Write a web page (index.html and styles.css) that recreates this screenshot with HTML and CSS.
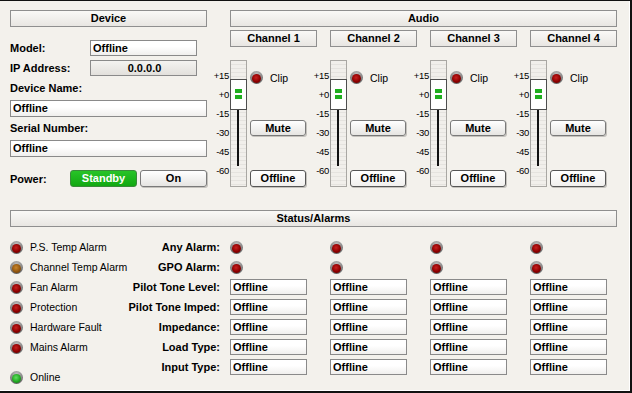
FILE: index.html
```html
<!DOCTYPE html>
<html lang="en">
<head>
    <meta charset="UTF-8">
    <title>Amplifier Status</title>
    <link rel="stylesheet" href="styles.css">
</head>
<body>
    <div class="panel">
        <div class="top">
            <!-- Device -->
            <div class="device">
                <div class="bar">Device</div>
                <div class="row first">
                    <span class="label">Model:</span>
                    <div class="field short">Offline</div>
                </div>
                <div class="row">
                    <span class="label">IP Address:</span>
                    <div class="field short center">0.0.0.0</div>
                </div>
                <div class="row">
                    <span class="label">Device Name:</span>
                </div>
                <div class="field wide">Offline</div>
                <div class="row gap3">
                    <span class="label">Serial Number:</span>
                </div>
                <div class="field wide">Offline</div>
                <div class="row power">
                    <span class="label power-label">Power:</span>
                    <button class="btn standby">Standby</button>
                    <button class="btn on">On</button>
                </div>
            </div>

            <!-- Audio -->
            <div class="audio">
                <div class="bar">Audio</div>
                <div class="ch-heads">
                    <div class="bar ch">Channel 1</div>
                    <div class="bar ch">Channel 2</div>
                    <div class="bar ch">Channel 3</div>
                    <div class="bar ch">Channel 4</div>
                </div>
                <div class="ch-bodies">
                    <div class="ch-body">
                        <div class="scale"><span>+15</span><span>+0</span><span>-15</span><span>-30</span><span>-45</span><span>-60</span></div>
                        <div class="track"><div class="handle"><i></i><i></i></div><div class="stem"></div></div>
                        <div class="controls">
                            <div class="clip"><span class="led red"></span>Clip</div>
                            <button class="btn mute">Mute</button>
                            <button class="btn state">Offline</button>
                        </div>
                    </div>
                    <div class="ch-body">
                        <div class="scale"><span>+15</span><span>+0</span><span>-15</span><span>-30</span><span>-45</span><span>-60</span></div>
                        <div class="track"><div class="handle"><i></i><i></i></div><div class="stem"></div></div>
                        <div class="controls">
                            <div class="clip"><span class="led red"></span>Clip</div>
                            <button class="btn mute">Mute</button>
                            <button class="btn state">Offline</button>
                        </div>
                    </div>
                    <div class="ch-body">
                        <div class="scale"><span>+15</span><span>+0</span><span>-15</span><span>-30</span><span>-45</span><span>-60</span></div>
                        <div class="track"><div class="handle"><i></i><i></i></div><div class="stem"></div></div>
                        <div class="controls">
                            <div class="clip"><span class="led red"></span>Clip</div>
                            <button class="btn mute">Mute</button>
                            <button class="btn state">Offline</button>
                        </div>
                    </div>
                    <div class="ch-body">
                        <div class="scale"><span>+15</span><span>+0</span><span>-15</span><span>-30</span><span>-45</span><span>-60</span></div>
                        <div class="track"><div class="handle"><i></i><i></i></div><div class="stem"></div></div>
                        <div class="controls">
                            <div class="clip"><span class="led red"></span>Clip</div>
                            <button class="btn mute">Mute</button>
                            <button class="btn state">Offline</button>
                        </div>
                    </div>
                </div>
            </div>
        </div>

        <!-- Status/Alarms -->
        <div class="status">
            <div class="bar">Status/Alarms</div>
            <div class="status-body">
                <ul class="alarms">
                    <li><span class="led red"></span>P.S. Temp Alarm</li>
                    <li><span class="led amber"></span>Channel Temp Alarm</li>
                    <li><span class="led red"></span>Fan Alarm</li>
                    <li><span class="led red"></span>Protection</li>
                    <li><span class="led red"></span>Hardware Fault</li>
                    <li><span class="led red"></span>Mains Alarm</li>
                    <li class="online"><span class="led green"></span>Online</li>
                </ul>
                <div class="grid">
                    <span class="glabel">Any Alarm:</span>
                    <span class="cell"><span class="led red"></span></span>
                    <span class="cell"><span class="led red"></span></span>
                    <span class="cell"><span class="led red"></span></span>
                    <span class="cell"><span class="led red"></span></span>

                    <span class="glabel">GPO Alarm:</span>
                    <span class="cell"><span class="led red"></span></span>
                    <span class="cell"><span class="led red"></span></span>
                    <span class="cell"><span class="led red"></span></span>
                    <span class="cell"><span class="led red"></span></span>

                    <span class="glabel">Pilot Tone Level:</span>
                    <span class="cell"><span class="field cellf">Offline</span></span>
                    <span class="cell"><span class="field cellf">Offline</span></span>
                    <span class="cell"><span class="field cellf">Offline</span></span>
                    <span class="cell"><span class="field cellf">Offline</span></span>

                    <span class="glabel">Pilot Tone Imped:</span>
                    <span class="cell"><span class="field cellf">Offline</span></span>
                    <span class="cell"><span class="field cellf">Offline</span></span>
                    <span class="cell"><span class="field cellf">Offline</span></span>
                    <span class="cell"><span class="field cellf">Offline</span></span>

                    <span class="glabel">Impedance:</span>
                    <span class="cell"><span class="field cellf">Offline</span></span>
                    <span class="cell"><span class="field cellf">Offline</span></span>
                    <span class="cell"><span class="field cellf">Offline</span></span>
                    <span class="cell"><span class="field cellf">Offline</span></span>

                    <span class="glabel">Load Type:</span>
                    <span class="cell"><span class="field cellf">Offline</span></span>
                    <span class="cell"><span class="field cellf">Offline</span></span>
                    <span class="cell"><span class="field cellf">Offline</span></span>
                    <span class="cell"><span class="field cellf">Offline</span></span>

                    <span class="glabel">Input Type:</span>
                    <span class="cell"><span class="field cellf">Offline</span></span>
                    <span class="cell"><span class="field cellf">Offline</span></span>
                    <span class="cell"><span class="field cellf">Offline</span></span>
                    <span class="cell"><span class="field cellf">Offline</span></span>
                </div>
            </div>
        </div>
    </div>
</body>
</html>
```

FILE: styles.css
```css
* {
    margin: 0;
    padding: 0;
    box-sizing: border-box;
    font-family: 'Liberation Sans', Arial, sans-serif;
}

html, body {
    width: 632px;
    height: 393px;
    overflow: hidden;
}

body {
    background: #f3f1ec;
    color: #000;
}

.panel {
    width: 632px;
    height: 393px;
    border-top: 1px solid #111;
    border-right: 2px solid #111;
    border-bottom: 2px solid #111;
    box-shadow: inset -1px -1px 0 #fff;
    padding: 9px 0 0 10px;
}

/* Header bars */
.bar {
    height: 17px;
    border: 1px solid #8f8f8f;
    background: linear-gradient(to bottom, #faf9f7, #e8e6e2);
    font-size: 11px;
    font-weight: bold;
    line-height: 15px;
    text-align: center;
}

.top {
    display: flex;
    gap: 23px;
}

/* Device section */
.device {
    width: 197px;
    display: flex;
    flex-direction: column;
}

.row {
    display: flex;
    align-items: center;
    height: 16px;
    margin-top: 4px;
}

.row.first {
    margin-top: 13px;
}

.row.gap3 {
    margin-top: 3px;
}

.label {
    width: 80px;
    font-size: 11px;
    font-weight: bold;
}

.field {
    display: block;
    height: 16px;
    border: 1px solid #8a8a8a;
    background: linear-gradient(to bottom, #fff 40%, #f0efed);
    font-size: 11px;
    font-weight: bold;
    line-height: 14px;
    padding-left: 2px;
    white-space: nowrap;
}

.field.short {
    width: 107px;
}

.field.center {
    text-align: center;
    background: linear-gradient(to bottom, #f4f3f1, #e2e0dc);
}

.field.wide {
    width: 197px;
    height: 17px;
    line-height: 15px;
    margin-top: 4px;
}

.row.power {
    height: 17px;
    margin-top: 13px;
}

.power-label {
    width: 60px;
}

.btn {
    height: 17px;
    border: 1px solid #7a7a7a;
    border-radius: 3px;
    background: linear-gradient(to bottom, #fff, #e6e5e2);
    box-shadow: 1px 1px 0 #c4c2bd;
    font-size: 11px;
    font-weight: bold;
    color: #000;
    line-height: 15px;
}

.btn.standby {
    width: 67px;
    background: linear-gradient(to bottom, #28c428, #12a812);
    border-color: #3a8a3a;
    color: #fff;
    box-shadow: none;
}

.btn.on {
    width: 67px;
    margin-left: 3px;
}

/* Audio section */
.audio {
    width: 387px;
}

.ch-heads {
    display: flex;
    gap: 13px;
    margin-top: 3px;
}

.bar.ch {
    width: 87px;
}

.ch-bodies {
    display: flex;
    margin-top: 13px;
    margin-left: -17px;
}

.ch-body {
    width: 100px;
    height: 127px;
    display: flex;
}

.scale {
    width: 17px;
    padding-top: 6px;
    display: flex;
    flex-direction: column;
    align-items: flex-end;
    padding-right: 1px;
}

.scale span {
    height: 19px;
    line-height: 19px;
    font-size: 9.5px;
    letter-spacing: -0.3px;
}

.track {
    position: relative;
    width: 17px;
    height: 127px;
    border: 1px solid #a9a7a3;
    background: repeating-linear-gradient(to bottom, #f1efeb 0 3px, #e5e3df 3px 4px);
}

.handle {
    position: absolute;
    left: -1px;
    top: 18px;
    width: 17px;
    height: 31px;
    background: #fff;
    border: 1px solid #4e4e4e;
}

.handle i {
    display: block;
    width: 7px;
    height: 4px;
    margin: 0 0 2px 4px;
    background: #1fae1f;
}

.handle i:first-child {
    margin-top: 9px;
}

.stem {
    position: absolute;
    left: 6px;
    top: 49px;
    width: 2px;
    height: 56px;
    background: #111;
}

.controls {
    width: 56px;
    margin-left: 3px;
    display: flex;
    flex-direction: column;
}

.clip {
    display: flex;
    align-items: center;
    height: 13px;
    margin-top: 11px;
    font-size: 10.5px;
}

.clip .led {
    margin-right: 7px;
}

.btn.mute {
    width: 56px;
    height: 16px;
    line-height: 14px;
    margin-top: 36px;
}

.btn.state {
    width: 56px;
    margin-top: 34px;
    background: linear-gradient(to bottom, #fff, #f1f0ee);
    border-color: #555;
}

/* LEDs */
.led {
    display: inline-block;
    flex: none;
    position: relative;
    width: 13px;
    height: 13px;
    border-radius: 50%;
    background: radial-gradient(circle at 50% 30%, #c9c9c9 0, #8a8a8a 50%, #3c3c3c 100%);
}

.led::after {
    content: '';
    position: absolute;
    left: 2px;
    top: 3px;
    width: 9px;
    height: 9px;
    border-radius: 50%;
    background: radial-gradient(circle at 45% 40%, #c82020 0, #8d0000 55%, #4a0000 100%);
}

.led.amber::after {
    background: radial-gradient(circle at 45% 40%, #c9862a 0, #93570f 55%, #5a3205 100%);
}

.led.green::after {
    background: radial-gradient(circle at 45% 40%, #5fe05f 0, #22a822 55%, #0e6a0e 100%);
}

/* Status section */
.status {
    width: 607px;
    margin-top: 23px;
}

.status-body {
    display: flex;
    margin-top: 10px;
}

.alarms {
    list-style: none;
    width: 110px;
}

.alarms li {
    display: flex;
    align-items: center;
    height: 20px;
    font-size: 10.5px;
    white-space: nowrap;
}

.alarms li .led {
    margin-right: 7px;
}

.alarms li.online {
    margin-top: 10px;
}

.grid {
    display: grid;
    grid-template-columns: 110px 100px 100px 100px 87px;
    grid-auto-rows: 20px;
}

.glabel {
    display: flex;
    align-items: center;
    justify-content: flex-end;
    padding-right: 10px;
    font-size: 11px;
    font-weight: bold;
    white-space: nowrap;
}

.cell {
    display: flex;
    align-items: center;
}

.field.cellf {
    width: 77px;
}
```
